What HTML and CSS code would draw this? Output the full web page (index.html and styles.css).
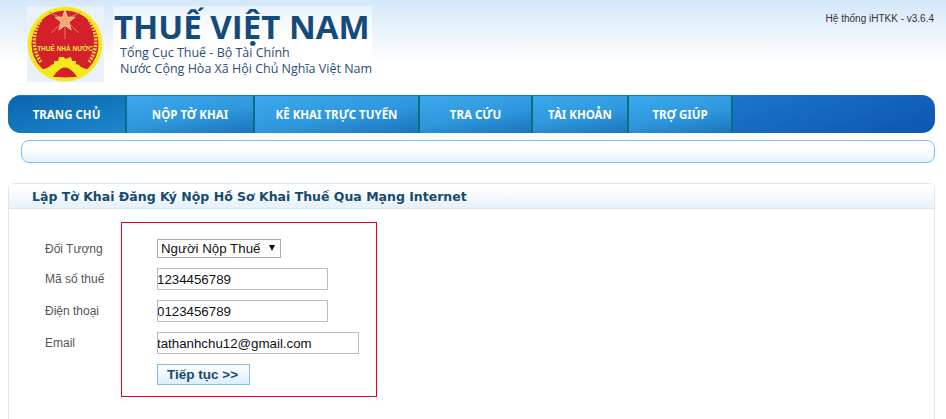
FILE: index.html
```html
<!DOCTYPE html>
<html lang="en">
<head>
    <meta charset="UTF-8">
    <meta name="viewport" content="width=device-width, initial-scale=1.0">
    <title>Thuế Việt Nam</title>
    <link rel="stylesheet" href="styles.css">
</head>
<body>
    <header class="top">
        <svg class="logo" width="77" height="76" viewBox="0 0 77 76">
            <rect width="77" height="76" fill="#e9f2fb"/>
            <circle cx="38" cy="38" r="37.500" fill="#f6e81e"/>
            <circle cx="38" cy="38" r="33.500" fill="#d4202a"/>
            <g fill="none" stroke="#f3d43a" stroke-width="3.500" stroke-dasharray="2 1.300">
                <path d="M14 14 C5 26 5 44 14 56"/>
                <path d="M62 14 C71 26 71 44 62 56"/>
            </g>
            <g stroke="#e8825a" stroke-width="1">
                <path d="M38 14 L22 6 M38 14 L54 6 M38 14 L24 27 M38 14 L52 27 M38 14 L38 33"/>
            </g>
            <path d="M38 4 L40.600 11.200 L48 11.200 L42 16 L44.200 24 L38 19.400 L31.800 24 L34 16 L28 11.200 L35.400 11.200 Z" fill="#f5a77a" stroke="#f7dca0" stroke-width="0.800"/>
            <text x="38" y="44.500" class="logo-text" text-anchor="middle">THUẾ NHÀ NƯỚC</text>
            <path d="M13 64 Q22 62 24 59 L27 58 L27 55 L31 55 L32 51 L37 51 L38 53 L44 51 L45 55 L49 55 L49 58 L52 59 Q54 62 63 64 L50 71 L26 71 Z" fill="#f6e81e"/>
            <path d="M26 71 Q38 52 50 71 Z" fill="#d4202a"/>
        </svg>
        <div class="brand">
            <div class="brand-name">THUẾ VIỆT NAM</div>
            <div class="brand-sub">Tổng Cục Thuế - Bộ Tài Chính</div>
            <div class="brand-sub">Nước Cộng Hòa Xã Hội Chủ Nghĩa Việt Nam</div>
        </div>
        <div class="version">Hệ thống iHTKK - v3.6.4</div>
    </header>

    <nav class="menu">
        <a class="menu-item first" style="width: 119px">TRANG CHỦ</a>
        <a class="menu-item" style="width: 128px">NỘP TỜ KHAI</a>
        <a class="menu-item" style="width: 165px">KÊ KHAI TRỰC TUYẾN</a>
        <a class="menu-item" style="width: 113px">TRA CỨU</a>
        <a class="menu-item" style="width: 96px">TÀI KHOẢN</a>
        <a class="menu-item" style="width: 104px">TRỢ GIÚP</a>
    </nav>

    <div class="info-bar"></div>

    <section class="panel">
        <h2 class="panel-title">Lập Tờ Khai Đăng Ký Nộp Hồ Sơ Khai Thuế Qua Mạng Internet</h2>
        <form class="reg-form">
            <label class="field-label">Đối Tượng</label>
            <span class="select-wrap">
                <select class="select-box">
                    <option>Người Nộp Thuế</option>
                </select>
            </span>
            <label class="field-label">Mã số thuế</label>
            <input class="text-box" type="text" value="1234456789">
            <label class="field-label">Điện thoại</label>
            <input class="text-box" type="text" value="0123456789">
            <label class="field-label">Email</label>
            <input class="text-box wide" type="text" value="tathanhchu12@gmail.com">
            <span></span>
            <button class="next-btn" type="button">Tiếp tục &gt;&gt;</button>
        </form>
        <div class="red-box"></div>
    </section>
</body>
</html>
```

FILE: styles.css
```css
body {
    font-family: "Liberation Sans", Arial, sans-serif;
    margin: 0;
    background: #fff linear-gradient(#d4e7f9, #fff 62px) no-repeat;
}
.top {
    display: flex;
    height: 95px;
    padding: 6px 12px 0 27px;
    box-sizing: border-box;
}
.logo {
    flex: none;
}
.logo-text {
    font-family: "Liberation Sans Narrow", "Liberation Sans", Arial, sans-serif;
    font-size: 6.500px;
    font-weight: bold;
    fill: #f8e34a;
}
.brand {
    margin-left: 9px;
    background: linear-gradient(rgba(255, 255, 255, 0.4), #fff 50%);
    height: 76px;
    padding: 6px 0 0 1px;
    box-sizing: border-box;
}
.brand-name {
    font-family: "Open Sans", sans-serif;
    font-size: 33px;
    font-weight: 700;
    line-height: 30px;
    margin-bottom: 3px;
    color: #154b7b;
    white-space: nowrap;
}
.brand-sub {
    font-family: "Open Sans", sans-serif;
    font-size: 12.500px;
    line-height: 16px;
    color: #2a4d78;
    padding-left: 6px;
    white-space: nowrap;
}
.version {
    margin-left: auto;
    font-size: 10px;
    line-height: 12px;
    margin-top: 7px;
    color: #333;
}
.menu {
    display: flex;
    height: 38px;
    margin: 0 11px 0 8px;
    border-radius: 13px;
    overflow: hidden;
    background:
        radial-gradient(circle at 72% 55%, rgba(255, 255, 255, 0.35) 0, transparent 3px),
        linear-gradient(160deg, #2f9ff0 30%, #0e55b3 100%);
}
.menu-item {
    flex: none;
    box-sizing: border-box;
    display: flex;
    align-items: center;
    justify-content: center;
    padding-bottom: 1px;
    border-right: 2px solid #0b6f83;
    border-top: 1px solid #127fc4;
    font-family: "Noto Sans", sans-serif;
    font-size: 11.500px;
    font-weight: bold;
    color: #fff;
    background: linear-gradient(170deg, #3da8ec 0%, #2f97dd 55%, #1874bd 100%);
}
.first {
    background: linear-gradient(165deg, #0a66ad, #1c87cf);
}
.info-bar {
    height: 21px;
    margin: 7px 11px 0 21px;
    border: 1px solid #7cbffa;
    border-radius: 8px;
    background: linear-gradient(#fff 35%, #e6f1fb);
}
.panel {
    position: relative;
    height: 235px;
    margin: 20px 11px 0 8px;
    border: 1px solid #d6e8f6;
    border-bottom: 0;
    border-radius: 6px 6px 0 0;
}
.panel-title {
    margin: 0;
    height: 25px;
    box-sizing: border-box;
    padding: 4px 0 0 23px;
    font-family: "DejaVu Sans", sans-serif;
    font-size: 12.500px;
    line-height: 17px;
    font-weight: bold;
    color: #174a6e;
    border-bottom: 1px solid #d6e8f6;
    background: linear-gradient(#fff 20%, #e4f0fb);
}
.reg-form {
    display: grid;
    grid-template-columns: 112px 1fr;
    align-items: center;
    row-gap: 10px;
    padding: 30px 0 0 36px;
}
.field-label {
    font-size: 12px;
    color: #555;
}
.select-wrap {
    position: relative;
    width: 124px;
    height: 19px;
}
.select-wrap::after {
    content: "";
    position: absolute;
    right: 6px;
    top: 6px;
    border-left: 3.500px solid transparent;
    border-right: 3.500px solid transparent;
    border-top: 6px solid #111;
}
.select-box {
    appearance: none;
    width: 124px;
    height: 19px;
    box-sizing: border-box;
    border: 1px solid #aaa;
    border-radius: 0;
    background: #fff;
    padding: 0 0 0 3px;
    font-family: "Liberation Sans", Arial, sans-serif;
    font-size: 13.300px;
    color: #111;
}
.text-box {
    width: 171px;
    height: 22px;
    box-sizing: border-box;
    border: 1px solid #bbb;
    padding: 0;
    text-indent: -1px;
    font-family: "Liberation Sans", Arial, sans-serif;
    font-size: 13.300px;
    color: #111;
}
.wide {
    width: 202px;
}
.next-btn {
    width: 93px;
    height: 21px;
    box-sizing: border-box;
    border: 1px solid #7cbffa;
    padding: 0 2px 0 0;
    background: linear-gradient(#fff, #dcedfb);
    font-family: "Liberation Sans", Arial, sans-serif;
    font-size: 13.500px;
    font-weight: bold;
    color: #174a6e;
}
.red-box {
    position: absolute;
    left: 112px;
    top: 38px;
    width: 254px;
    height: 173px;
    border: 1px solid #e60012;
}
```
